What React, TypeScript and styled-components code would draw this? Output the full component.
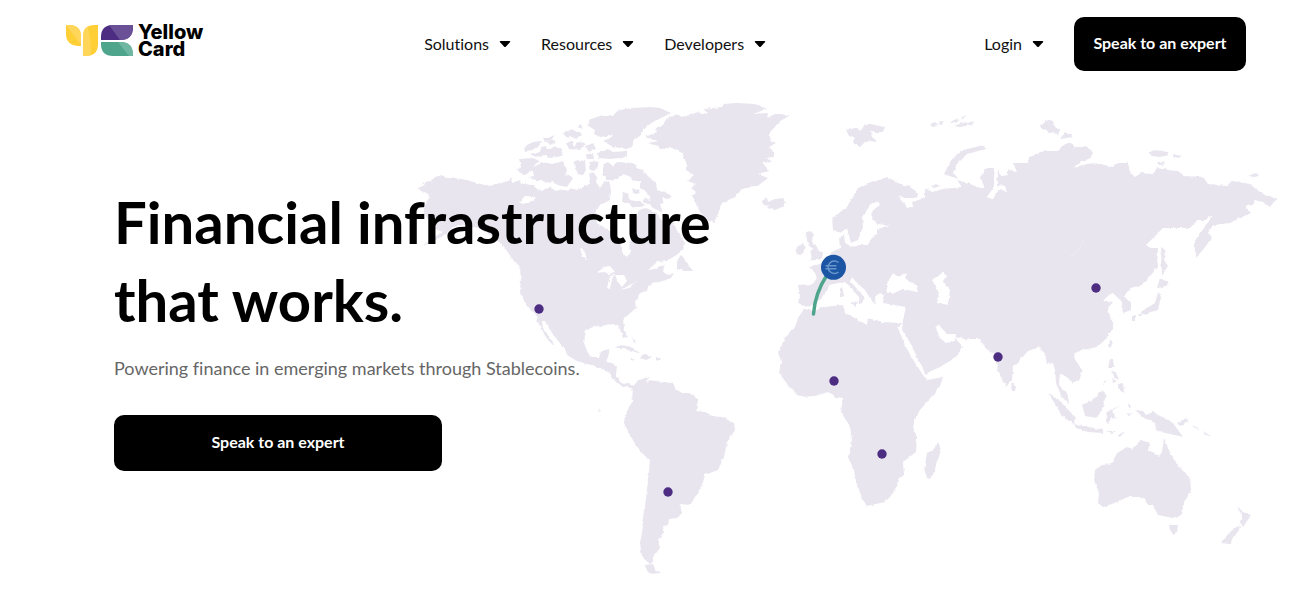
import React from "react";
import styled, { createGlobalStyle } from "styled-components";

const GlobalStyle = createGlobalStyle`
  * { box-sizing: border-box; }
  body {
    margin: 0;
    background: #fff;
    color: #000;
    font-family: Lato, "Liberation Sans", sans-serif;
    font-variant-ligatures: none;
  }
`;

const Header = styled.header`
  display: flex;
  align-items: center;
  justify-content: space-between;
  min-height: 88px;
  padding: 0 66px;
`;

const Brand = styled.a`
  display: flex;
  align-items: center;
  gap: 5px;
  padding-bottom: 7px;
  color: #000;
  text-decoration: none;
`;

const BrandName = styled.span`
  width: 68px;
  font-family: Inter, "Liberation Sans", sans-serif;
  font-size: 20px;
  font-weight: 800;
  line-height: 17px;
`;

const Nav = styled.nav`
  display: flex;
  align-items: center;
  gap: 30px;
`;

const MenuButton = styled.button`
  display: flex;
  align-items: center;
  gap: 10px;
  padding: 0;
  border: 0;
  background: none;
  color: #111;
  font: inherit;
  font-size: 16px;
  font-variant-ligatures: none;
  line-height: 24px;
  cursor: pointer;
`;

const CallToAction = styled.button<{ $wide?: boolean }>`
  width: ${(p) => (p.$wide ? "328px" : "172px")};
  height: ${(p) => (p.$wide ? "56px" : "54px")};
  padding: 0 0 3px;
  border: 0;
  border-radius: 10px;
  background: #000;
  color: #fff;
  font: inherit;
  font-size: 16px;
  font-weight: 700;
  cursor: pointer;
`;

const Hero = styled.main`
  display: grid;
  grid-template-columns: 368fr 880fr;
  padding: 0 32px;
`;

const WorldMap = styled.svg`
  grid-column: 2;
  grid-row: 1;
  width: 100%;
  height: auto;
`;

const Copy = styled.section`
  grid-column: 1 / -1;
  grid-row: 1;
  z-index: 1;
  padding: 95px 0 0 82px;
`;

const Title = styled.h1`
  margin: 0;
  font-size: 58px;
  font-weight: 700;
  line-height: 78px;
`;

const Lead = styled.p`
  margin: 16px 0 33px;
  color: #666;
  font-size: 18px;
  line-height: 27px;
`;

const Caret = () => (
  <svg width="12" height="8" viewBox="0 0 12 8" aria-hidden="true">
    <path d="M1.500 1h9q1.400 0 .4 1.200L7 6.400q-1 1-2 0L1.100 2.200Q.100 1 1.500 1z" fill="#000" />
  </svg>
);

const Menu = ({ label }: { label: string }) => (
  <MenuButton type="button">
    {label}
    <Caret />
  </MenuButton>
);

const LogoMark = () => (
  <svg width="67" height="31" viewBox="0 0 67 31" aria-hidden="true">
    <path d="M0 0h3q12 0 12 12v9h-3Q0 20 0 9z" fill="#ffcf35" />
    <path d="M0 0h3q12 0 12 12v8z" fill="#ffd65a" />
    <path d="M17 31V11Q17 0 29 0h3v19q0 12-12 12z" fill="#ffcf35" />
    <path d="M17 31V13q0-8 5-11 3 15 3 27-2 2-8 2z" fill="#ffd65a" />
    <path d="M35 15V12Q35 0 47 0h20v2q0 13-13 13z" fill="#4d2d82" />
    <path d="M43 0h24v2q0 13-13 13z" fill="#6a5096" />
    <path d="M35 17h19q13 0 13 13v1H47Q35 31 35 19z" fill="#4fa58c" />
    <path d="M52 17h2q13 0 13 13v1h-4z" fill="#70b7a3" />
  </svg>
);

/* Land outlines, one closed ring per landmass */
const continents = [
  // North and Central America
  "418 188 425 185 422 183 430 181 435 177 442 175 446 178 455 178 467 180 480 184 490 186 500 183 506 182 511 178 512 183 520 180 523 184 533 185 538 190 543 191 550 187 556 191 563 189 568 191 571 188 577 190 583 187 588 185 590 179 589 174 592 172 597 177 596 182 600 188 604 182 609 181 611 190 610 200 600 205 595 213 597 223 605 228 613 233 620 240 622 252 627 257 630 252 629 243 634 236 636 228 634 220 639 210 646 208 655 212 662 220 667 225 673 222 678 232 685 243 683 250 675 256 667 261 657 262 648 270 655 269 660 266 665 265 663 272 668 275 674 273 671 278 660 282 655 281 648 287 647 291 639 293 638 299 635 301 636 308 628 315 623 320 624 327 627 337 623 338 619 327 613 324 605 326 600 327 595 326 586 330 584 343 588 353 592 357 599 357 602 351 609 349 609 354 606 362 612 363 617 366 616 376 623 384 628 383 634 386 632 391 629 386 623 387 613 379 608 372 595 366 587 364 577 361 567 355 564 348 555 337 548 327 545 321 542 321 543 328 548 335 554 344 550 343 546 337 542 331 538 322 535 313 530 310 525 302 520 293 521 277 520 268 513 260 505 248 498 241 488 233 478 228 465 225 453 227 447 233 436 240 422 246 433 238 443 232 432 228 427 218 423 210 430 195 424 193",
  // Greenland
  "645 137 657 132 655 129 663 125 668 118 677 114 682 117 698 113 691 111 708 114 704 109 722 107 724 104 737 103 755 104 767 109 753 114 768 113 767 118 775 114 780 114 790 116 780 121 774 128 770 132 770 140 776 143 769 147 774 152 773 157 767 158 772 163 762 162 769 171 758 174 768 178 759 185 742 189 735 197 722 203 718 213 714 223 707 220 700 212 695 202 691 196 696 192 691 188 696 184 688 181 694 175 686 170 686 162 682 153 672 148 660 149 658 146 648 143 658 141",
  // Ellesmere
  "587 125 591 119 600 116 613 116 617 111 630 108 653 107 660 108 671 113 653 122 643 129 640 136 633 140 633 146 627 149 613 147 603 141 610 138 613 135 600 137 594 134 595 130",
  "597 153 608 149 613 152 627 151 627 157 610 159 598 158",
  // Banks and Victoria
  "519 159 533 158 540 161 534 165 533 170 525 175 517 171 521 166",
  "528 177 534 176 532 168 543 162 552 164 563 161 567 170 566 174 573 178 567 187 557 185 553 182 547 183 541 180 534 180",
  "573 162 578 160 585 161 586 170 582 175 578 174 576 168",
  "590 162 599 161 597 168 594 171 590 170",
  // Baffin
  "603 165 608 162 613 166 617 162 633 163 637 168 643 171 650 178 656 182 657 190 665 192 671 196 668 199 662 198 664 203 660 204 663 213 653 208 648 204 642 202 645 198 650 200 648 193 640 188 640 182 632 180 630 176 623 175 613 180 606 180 603 175",
  "623 192 628 194 630 200 640 202 646 205 640 207 633 207 629 203 622 202",
  "632 188 636 190 640 189 638 194 633 193",
  // Arctic islands
  "524 149 527 145 533 142 542 141 537 147 532 150 525 151",
  "530 154 540 152 543 146 549 150 555 146 563 150 562 156 550 158 544 155 536 157",
  "543 138 548 138 555 135 551 140 545 142",
  "547 142 553 139 556 142 550 145",
  "563 133 570 130 580 132 582 135 577 139 572 137 567 138",
  "566 143 572 141 574 146 580 141 586 144 580 150 569 149",
  "586 146 593 143 596 149 588 152",
  "585 155 593 153 594 159 587 159",
  "577 127 581 125 583 129",
  // Caribbean
  "615 347 623 345 633 348 640 353 632 352 625 348 618 348",
  "641 355 645 354 652 357 646 360 640 358",
  "630 358 635 358 632 361",
  "656 358 661 358 660 360 656 360",
  "631 334 632 337 635 340 636 344 633 340",
  // South America
  "633 387 638 380 643 379 648 376 647 383 650 380 662 382 672 383 676 389 682 393 690 393 697 399 698 407 696 411 705 412 713 416 722 417 734 423 735 430 727 442 724 457 718 470 705 475 702 485 696 496 690 505 680 504 682 513 677 518 669 519 668 525 663 526 664 532 658 540 660 548 653 557 653 562 650 564 642 557 640 543 643 527 642 523 645 507 648 480 650 460 640 452 630 435 624 423 625 415 632 402",
  "644 565 653 564 656 571 662 573 649 574",
  // Iceland, Ireland, Great Britain
  "762 201 767 198 768 202 775 199 783 198 787 203 782 207 775 210 767 208 769 205 763 204",
  "797 247 803 243 806 247 803 253 797 256 796 251",
  "806 232 811 231 814 235 812 240 817 247 819 251 823 253 822 259 815 260 809 261 812 257 810 253 812 248 807 242",
  // Svalbard
  "846 130 850 129 857 128 860 131 865 125 870 124 880 126 885 127 883 132 875 132 870 131 872 137 878 142 869 141 864 143 860 147 853 143 855 138 849 136",
  // Eurasia
  "798 303 800 295 798 285 813 284 817 278 815 273 809 267 820 264 825 259 832 252 840 248 839 238 844 234 845 243 852 247 860 245 868 245 872 237 877 234 877 229 884 227 890 225 877 224 871 217 873 210 880 205 878 201 872 203 862 217 863 227 858 240 851 243 847 228 840 233 833 230 832 218 847 207 851 200 858 188 870 182 880 180 887 177 893 180 895 182 910 187 918 193 917 198 905 198 898 196 904 204 907 208 913 207 912 202 925 198 925 188 932 192 943 189 962 187 957 180 970 184 980 188 985 188 980 177 987 168 994 168 994 187 987 197 993 199 998 190 1007 191 1005 186 997 185 998 170 1002 176 1008 175 1007 169 1017 172 1013 163 1028 163 1029 158 1037 153 1045 151 1058 151 1062 146 1070 142 1075 147 1088 147 1093 153 1090 158 1080 163 1073 168 1082 165 1093 163 1105 165 1113 167 1118 163 1128 163 1130 172 1135 177 1141 173 1153 174 1157 168 1168 170 1178 171 1183 176 1203 177 1208 184 1228 186 1232 181 1250 184 1257 190 1265 195 1277 199 1270 207 1262 202 1255 200 1253 205 1245 206 1251 213 1240 218 1230 223 1213 225 1208 233 1212 237 1206 246 1196 258 1194 242 1204 228 1213 215 1205 220 1197 220 1190 228 1163 228 1155 236 1146 245 1151 248 1158 248 1157 267 1148 279 1138 287 1134 286 1127 292 1125 297 1131 304 1131 310 1123 313 1122 302 1117 297 1113 293 1109 295 1103 301 1113 302 1107 310 1113 323 1113 328 1107 338 1097 347 1083 350 1075 353 1074 358 1082 370 1080 379 1073 384 1068 378 1060 373 1059 385 1068 395 1069 404 1062 397 1056 383 1055 370 1053 363 1047 364 1045 355 1040 347 1028 351 1021 359 1013 367 1012 380 1006 387 1002 380 998 370 994 353 990 352 985 347 980 339 965 339 955 337 963 347 955 358 940 367 925 374 922 366 917 358 912 346 902 330 903 320 906 307 895 305 883 303 884 295 878 294 875 297 876 305 870 298 865 290 852 278 850 281 865 298 859 305 859 297 845 282 838 283 830 285 827 290 820 300 810 307",
  // Mediterranean islands
  "840 289 842 286 844 296 840 298",
  "850 303 858 301 856 307",
  // Africa and Madagascar
  "804 309 815 311 823 307 843 305 845 313 855 318 867 325 868 318 882 322 902 323 898 328 905 345 912 358 923 375 927 380 943 377 940 386 933 395 920 410 913 423 914 431 917 437 916 452 903 462 904 475 898 479 897 487 891 496 885 502 867 506 863 500 856 482 854 470 848 457 852 440 850 427 841 412 843 398 835 397 828 392 815 396 800 397 788 385 779 373 781 362 778 352 785 338 795 327 798 318",
  "938 442 941 450 933 475 928 479 924 470 927 453 934 449",
  // Arctic Russia
  "984 145 985 149 967 154 956 165 954 173 958 179 944 174 948 166 952 159 963 150",
  "1040 126 1048 120 1053 121 1055 127 1060 130 1058 134 1049 132 1042 129",
  "1060 139 1065 132 1073 136 1067 138",
  "1149 153 1153 150 1168 152 1169 155 1160 157 1152 156",
  "1172 154 1182 156 1178 158 1173 156",
  "1157 162 1164 162 1163 165 1158 165",
  "1249 176 1255 173 1259 176 1254 177",
  "930 124 935 122 939 126 932 127",
  "938 122 944 121 941 125",
  "950 123 955 119 960 120 956 123",
  "954 126 962 123 970 122 977 121 970 125 960 127",
  "960 117 966 116 964 119",
  "931 186 936 184 940 186 934 188",
  // Sakhalin and Japan
  "1161 247 1165 250 1164 260 1168 266 1162 276",
  "1160 278 1169 283 1163 287 1157 288",
  "1158 292 1161 297 1158 310 1151 312 1146 315 1140 313 1147 308 1155 303",
  "1132 316 1136 315 1134 321 1132 321",
  "1138 314 1143 314 1140 317",
  // South-east Asia
  "1110 340 1113 341 1111 348 1108 346",
  "1012 382 1016 388 1013 392 1011 389",
  "1110 358 1113 360 1114 368 1108 368",
  "1111 370 1116 373 1119 380 1115 378",
  "1112 377 1117 382 1113 382",
  "1118 385 1123 382 1124 393 1118 389",
  "1102 386 1107 378 1105 383",
  "1048 393 1057 398 1075 417 1074 424 1063 417",
  "1074 424 1084 426 1103 430 1103 433 1088 432 1076 428",
  "1106 431 1116 431 1112 433",
  "1117 436 1125 431 1120 437",
  "1082 405 1093 400 1102 390 1106 394 1103 407 1097 418 1085 416",
  "1107 412 1120 405 1112 411 1117 419 1111 417 1109 424 1106 422",
  "1128 403 1131 406 1129 410",
  "1126 413 1134 414 1128 415",
  "1135 410 1143 411 1146 415 1153 412 1173 423 1183 437 1175 435 1165 433 1156 430 1155 423 1144 418",
  "1177 424 1187 418 1188 421 1181 426",
  "1193 425 1200 430 1196 429",
  "1203 431 1210 436 1205 435",
  // Australia, Tasmania, New Zealand
  "1095 470 1103 465 1112 463 1117 453 1122 450 1127 447 1133 449 1140 440 1150 443 1148 450 1159 457 1162 452 1164 438 1168 448 1175 462 1184 472 1190 478 1191 490 1183 505 1182 515 1173 518 1158 515 1153 505 1148 505 1143 497 1128 497 1112 504 1103 507 1098 503 1099 493 1094 480",
  "1169 525 1178 525 1177 532 1173 534 1170 530",
  "1237 506 1243 512 1251 515 1247 521 1243 527 1240 522 1242 516",
  "1240 524 1239 530 1229 544 1221 543 1229 533",
  "598 410 601 411 599 412",
  "677 260 681 255 684 258 688 264 692 271 685 271 677 269",
];

const waters = [
  // Great Lakes, Winnipeg, Great Bear and Great Slave
  "597 273 604 267 610 266 615 272 609 274 603 272",
  "610 276 614 275 611 283 610 289 607 288",
  "615 275 624 275 627 281 622 287 618 282",
  "620 290 632 284 637 280 629 288",
  "580 248 585 252 587 260 583 257",
  "519 202 525 196 536 197 530 202 524 204",
  // Black Sea, Caspian, Persian Gulf
  "887 283 893 273 898 277 907 273 905 278 918 287 917 292 903 289 894 293 887 293",
  "932 280 942 273 947 275 943 281 950 290 948 305 938 303 939 292",
  "935 326 940 325 946 334 956 334 955 341 946 343 940 338",
];

const ring = (points: string) => `M${points}z`;

const cities = [
  [539, 309], [668, 492], [834, 381], [882, 454], [998, 357], [1096, 288],
];

const PaymentMap = () => (
  <WorldMap viewBox="400 88 880 492" role="img" aria-label="World map of payment routes">
    <defs>
      <filter id="coast" x="0" y="0" width="100%" height="100%" colorInterpolationFilters="sRGB">
        <feTurbulence type="fractalNoise" baseFrequency="0.25" numOctaves="2" seed="4" result="noise" />
        <feDisplacementMap in="SourceGraphic" in2="noise" scale="3" xChannelSelector="R" yChannelSelector="G" />
      </filter>
    </defs>
    <g filter="url(#coast)">
      <path d={continents.map(ring).join("")} fill="#e8e5ef" />
      <path d={waters.map(ring).join("")} fill="#fff" />
    </g>
    <path d="M1069 257q12-6 14-16" fill="none" stroke="#efedf1" />
    {cities.map(([x, y]) => (
      <circle key={x} cx={x} cy={y} r="4.700" fill="#4d2d82" />
    ))}
    <path d="M813.500 314Q815 293 827 275" fill="none" stroke="#4fa58c" strokeWidth="3.500" strokeLinecap="round" />
    <circle cx="833.500" cy="267.300" r="12.500" fill="#1b55a3" />
    <path
      d="M838.500 262.500a6.300 6.300 0 1 0 0 9.500M825.500 265.800h11M825.500 268.800h11"
      fill="none"
      stroke="#6997cc"
      strokeWidth="1.500"
    />
  </WorldMap>
);

export default function App() {
  return (
    <>
      <GlobalStyle />
      <Header>
        <Brand href="#">
          <LogoMark />
          <BrandName>Yellow Card</BrandName>
        </Brand>
        <Nav aria-label="Main">
          <Menu label="Solutions" />
          <Menu label="Resources" />
          <Menu label="Developers" />
        </Nav>
        <Nav as="div">
          <Menu label="Login" />
          <CallToAction type="button">Speak to an expert</CallToAction>
        </Nav>
      </Header>
      <Hero>
        <PaymentMap />
        <Copy>
          <Title>
            Financial infrastructure
            <br />
            that works.
          </Title>
          <Lead>Powering finance in emerging markets through Stablecoins.</Lead>
          <CallToAction type="button" $wide>
            Speak to an expert
          </CallToAction>
        </Copy>
      </Hero>
    </>
  );
}
